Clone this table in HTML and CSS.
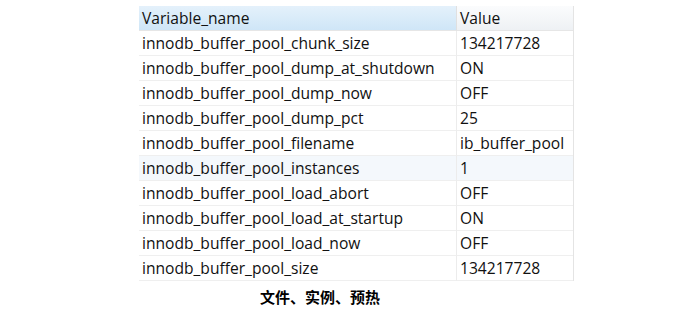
FILE: index.html
```html
<!DOCTYPE html>
<html>
<head>
<meta charset="utf-8">
<link rel="stylesheet" href="styles.css">
</head>
<body>
<div class="page">
  <div class="grid">
    <div class="hd hd-name">Variable_name</div><div class="hd hd-val">Value</div>
    <div class="c">innodb_buffer_pool_chunk_size</div><div class="c v">134217728</div>
    <div class="c">innodb_buffer_pool_dump_at_shutdown</div><div class="c v">ON</div>
    <div class="c">innodb_buffer_pool_dump_now</div><div class="c v">OFF</div>
    <div class="c">innodb_buffer_pool_dump_pct</div><div class="c v">25</div>
    <div class="c">innodb_buffer_pool_filename</div><div class="c v">ib_buffer_pool</div>
    <div class="c sel">innodb_buffer_pool_instances</div><div class="c v sel">1</div>
    <div class="c">innodb_buffer_pool_load_abort</div><div class="c v">OFF</div>
    <div class="c">innodb_buffer_pool_load_at_startup</div><div class="c v">ON</div>
    <div class="c">innodb_buffer_pool_load_now</div><div class="c v">OFF</div>
    <div class="c last">innodb_buffer_pool_size</div><div class="c v last">134217728</div>
  </div>
  <div class="caption">文件、实例、预热</div>
</div>
</body>
</html>
```
FILE: styles.css
```css
html, body { margin: 0; padding: 0; background: #fff; }
.page { padding: 6px 0 0 139px; }
.grid {
  display: grid;
  grid-template-columns: 317px 117px;
  width: 434px;
  font-family: "Open Sans", "Noto Sans", sans-serif;
  font-size: 15.6px;
  color: #111;
  border-right: 1px solid #e4e4e4;
}
.hd {
  height: 25px;
  line-height: 25px;
  padding-left: 3px;
  box-sizing: border-box;
  border-bottom: 1px solid #e6e6e6;
}
.hd-name { background: linear-gradient(#e4f1fb, #cfe6f7); }
.hd-val { background: linear-gradient(#fbfcfd, #eef1f4); border-left: 1px solid #e0e0e0; }
.c {
  height: 25px;
  line-height: 25px;
  padding-left: 3px;
  box-sizing: border-box;
  border-bottom: 1px solid #efefef;
  white-space: nowrap;
}
.v { border-left: 1px solid #ececec; }
.sel { background: #f4f8fc; }
.caption {
  margin: 5px 0 0 121px;
  width: 120px;
  font-family: "Noto Sans CJK SC", sans-serif;
  font-weight: bold;
  font-size: 15px;
  color: #000;
}
```
